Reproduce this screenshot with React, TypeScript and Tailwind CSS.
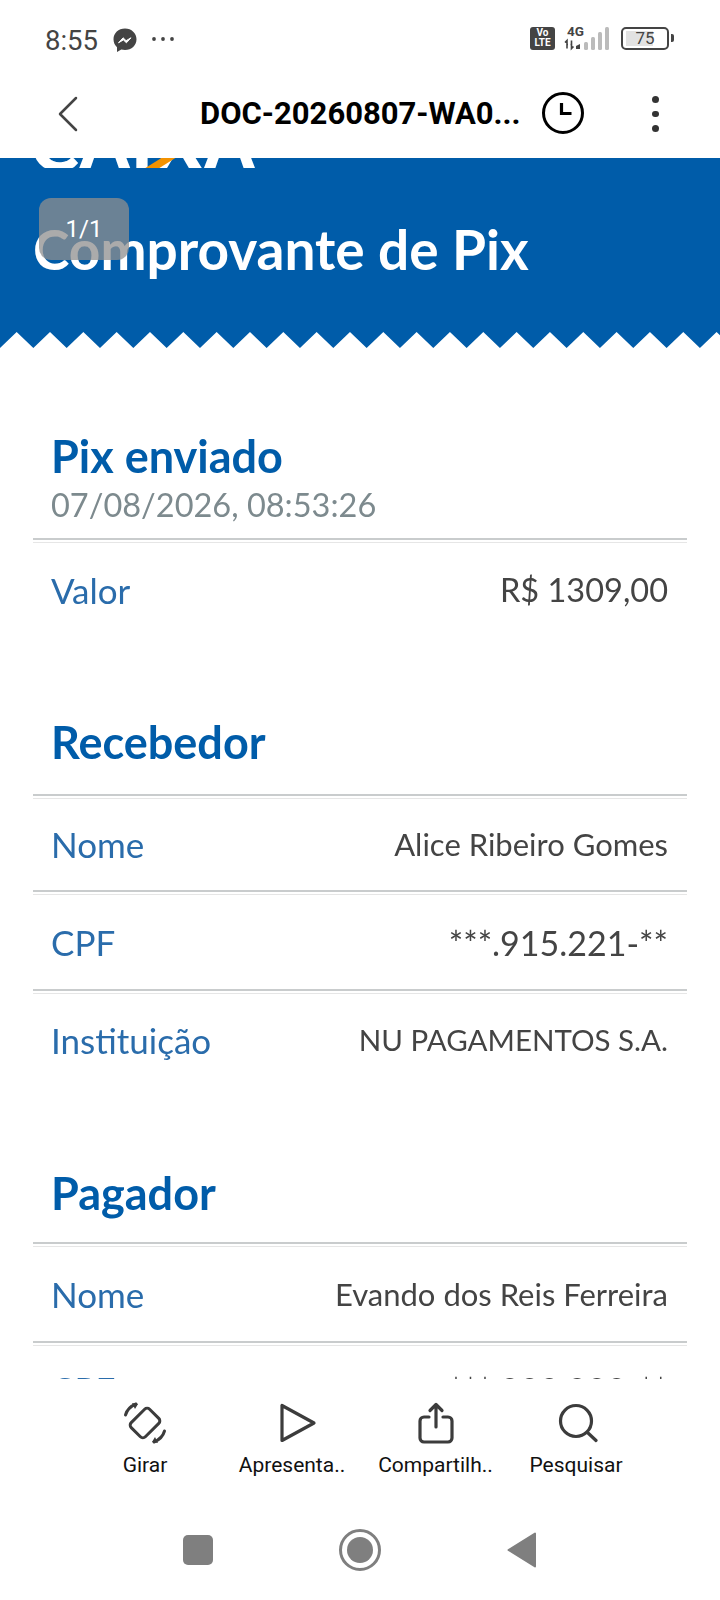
import React from 'react';

const docFont = "font-['Lato',sans-serif]";
const roboto = "font-['Roboto',sans-serif]";

function Divider() {
  return <div className="mx-[33px] h-[5px] border-t-2 border-b border-t-[#c9cccd] border-b-[#e6e6e6]" />;
}

function Row({ label, value, height, valueSize }: { label: string; value: string; height: string; valueSize: string }) {
  return (
    <div className={`flex items-center justify-between pl-[51px] pr-[52px] ${height}`}>
      <span className="text-[35px] text-[#2a6cab]">{label}</span>
      <span className={`${valueSize} text-[#444]`}>{value}</span>
    </div>
  );
}

function SectionTitle({ children, className }: { children: string; className: string }) {
  return <h2 className={`pl-[51px] text-[45px] leading-[50px] font-bold text-[#005ca9] ${className}`}>{children}</h2>;
}

function Zigzag() {
  const teeth = Array.from({ length: 23 }, (_, i) => `${i * 33.33} ,16 ${i * 33.33 + 16.67},0`).join(' ');
  return (
    <svg width="720" height="18" viewBox="0 0 720 18" className="block">
      <polygon points={`0,18 ${teeth} 720,18`} fill="#fff" />
    </svg>
  );
}

function ToolItem({ label, icon, width, iconClass = '' }: { label: string; icon: React.ReactNode; width: string; iconClass?: string }) {
  return (
    <div className={`flex flex-col items-center ${width}`}>
      <div className={`flex h-[44px] items-center ${iconClass}`}>{icon}</div>
      <span className="mt-[6px] whitespace-nowrap text-[21px] leading-[28px] text-[#111]">{label}</span>
    </div>
  );
}

export default function App() {
  return (
    <div className={`relative flex h-[1600px] w-[720px] flex-col overflow-hidden bg-white ${roboto}`}>
      {/* status bar */}
      <div className="flex h-[75px] items-end pb-[17px] pl-[45px] pr-[46px] text-[#444]">
        <span className="text-[27.5px] leading-[34px]">8:55</span>
        <svg width="24" height="25" viewBox="0 0 24 25" className="mb-[5px] ml-[15px]">
          <path d="M12 0.5C5.4 0.5 0.5 5.2 0.5 11.3c0 3.2 1.3 6 3.5 7.9V24l4.3-2.4c1.2.3 2.4.5 3.7.5 6.6 0 11.5-4.8 11.5-10.8S18.6.5 12 .5z" fill="#444" />
          <path d="M5.500 14.800l4.600-5 3 2.900 4.900-2.900-4.600 5-3-2.900z" fill="#fff" stroke="#fff" strokeWidth="1" strokeLinejoin="round" />
        </svg>
        <svg width="24" height="6" viewBox="0 0 24 6" className="mb-[16px] ml-[14px]">
          <circle cx="3" cy="3" r="1.900" fill="#444" />
          <circle cx="12" cy="3" r="1.900" fill="#444" />
          <circle cx="21" cy="3" r="1.900" fill="#444" />
        </svg>
        <div className="ml-auto flex items-center gap-[8px] pb-[7px]">
          <div className="flex h-[23px] w-[25px] flex-col items-center justify-center rounded-[3px] bg-[#444] text-[10px] leading-[10px] font-bold text-white">
            <span>Vo</span>
            <span>LTE</span>
          </div>
          <svg width="48" height="26" viewBox="0 0 48 26">
            <text x="4" y="11" fontSize="13.500" fontWeight="700" fill="#444" fontFamily="Roboto, sans-serif">4G</text>
            <path d="M2 17.500l2-2v8M4 19.500h1M8.500 15.500v8l2-2M7.500 19.500h1" stroke="#444" strokeWidth="1.600" fill="none" />
            <path d="M13 24v-3l4-2v5z" fill="#444" />
            <rect x="21" y="17" width="4" height="8" rx="1.500" fill="#bbb" />
            <rect x="28" y="12" width="4" height="13" rx="1.500" fill="#bbb" />
            <rect x="35" y="7" width="4" height="18" rx="1.500" fill="#bbb" />
            <rect x="42" y="2" width="4" height="23" rx="1.500" fill="#bbb" />
          </svg>
          <div className="ml-[2px] flex items-center">
            <div className="relative flex h-[23px] w-[48px] items-center justify-center overflow-hidden rounded-[5px] border-2 border-[#444]">
              <div className="absolute inset-y-[2px] left-[3px] w-[27px] bg-[#e2e2e2]" />
              <span className="relative text-[17px] leading-none text-[#444]">75</span>
            </div>
            <div className="ml-[2px] h-[8px] w-[3px] rounded-r-[2px] bg-[#444]" />
          </div>
        </div>
      </div>

      {/* toolbar */}
      <div className="flex h-[83px] items-center pb-[5px] pl-[58px]">
        <svg width="20" height="36" viewBox="0 0 20 36" fill="none" stroke="#444" strokeWidth="2.500" strokeLinecap="round" strokeLinejoin="round">
          <path d="M18 2L2 18l16 16" />
        </svg>
        <span className="ml-[122px] w-[325px] whitespace-nowrap text-[31px] font-bold text-black">DOC-20260807-WA0...</span>
        <svg width="44" height="44" viewBox="0 0 44 44" className="mb-[2px] ml-[16px]">
          <circle cx="22" cy="22" r="19.500" fill="none" stroke="#000" strokeWidth="3" />
          <path d="M20.500 12v10.500h10" fill="none" stroke="#000" strokeWidth="3.200" />
        </svg>
        <div className="ml-[67px] flex flex-col gap-[8px]">
          <div className="size-[6.500px] rounded-full bg-[#333]" />
          <div className="size-[6.500px] rounded-full bg-[#333]" />
          <div className="size-[6.500px] rounded-full bg-[#333]" />
        </div>
      </div>

      {/* document */}
      <div className={`h-[1221px] overflow-hidden ${docFont} blur-[0.5px]`}>
        <div className="flex h-[190px] flex-col justify-between bg-[#005ca9]">
          <div className="h-[10px] overflow-hidden pl-[30px]">
            <div className="relative -mt-[52px] w-[230px] text-[74px] leading-[74px] font-black text-white">
              CAIXA
              <div className="absolute bottom-[12px] left-[125px] h-[12px] w-[14px] -skew-x-[58deg] bg-[#f39200]" />
            </div>
          </div>
          <h1 className="pb-[67px] pl-[33px] text-[55px] leading-[64px] font-bold text-white">Comprovante de Pix</h1>
        </div>
        <div className="-mt-[16px]">
          <Zigzag />
        </div>
        <SectionTitle className="mt-[81px]">Pix enviado</SectionTitle>
        <p className="mt-[6px] pl-[51px] text-[32.500px] leading-[36px] text-[#7d8a8e]">07/08/2026, 08:53:26</p>
        <div className="mt-[15px]"><Divider /></div>
        <Row label="Valor" value="R$ 1309,00" height="h-[94px]" valueSize="text-[32.500px]" />
        <SectionTitle className="mt-[80px]">Recebedor</SectionTitle>
        <div className="mt-[27px]"><Divider /></div>
        <Row label="Nome" value="Alice Ribeiro Gomes" height="h-[91px]" valueSize="text-[31px]" />
        <Divider />
        <Row label="CPF" value="***.915.221-**" height="h-[94px]" valueSize="text-[34px]" />
        <Divider />
        <Row label="Instituição" value="NU PAGAMENTOS S.A." height="h-[92px]" valueSize="text-[29.500px]" />
        <SectionTitle className="mt-[82px]">Pagador</SectionTitle>
        <div className="mt-[24px]"><Divider /></div>
        <Row label="Nome" value="Evando dos Reis Ferreira" height="h-[94px]" valueSize="text-[31px]" />
        <Divider />
        <Row label="CPF" value="***.000.000-**" height="h-[86px]" valueSize="text-[34px]" />
      </div>

      {/* tool row */}
      <div className="flex pl-[72px] pt-[22px]">
        <ToolItem
          label="Girar"
          width="w-[146px]"
          icon={
            <svg width="44" height="44" viewBox="0 0 44 44" fill="none" stroke="#3c3c3c" strokeWidth="3" strokeLinejoin="round">
              <rect x="9" y="12" width="26" height="20" rx="3.500" transform="rotate(-45 22 22)" />
              <path d="M2.500 14C4 8.500 7 5.500 13 3" strokeLinecap="round" />
              <path d="M41.500 30C40 35.500 37 38.500 31 41" strokeLinecap="round" />
              <path d="M9 2l6 1-3 5zM35 42l-6-1 3-5z" fill="#3c3c3c" stroke="none" />
            </svg>
          }
        />
        <ToolItem
          label="Apresenta.."
          width="w-[148px]"
          iconClass="ml-[12px]"
          icon={
            <svg width="40" height="42" viewBox="0 0 40 42" fill="none" stroke="#3c3c3c" strokeWidth="3.200" strokeLinejoin="round">
              <path d="M4 3.500v35L36 21z" />
            </svg>
          }
        />
        <ToolItem
          label="Compartilh.."
          width="w-[139px]"
          icon={
            <svg width="36" height="42" viewBox="0 0 36 42" fill="none" stroke="#3c3c3c" strokeWidth="3.200" strokeLinecap="round" strokeLinejoin="round">
              <path d="M11 15H6a4 4 0 0 0-4 4v17a4 4 0 0 0 4 4h24a4 4 0 0 0 4-4V19a4 4 0 0 0-4-4h-5" />
              <path d="M18 25V3M12 8.500L18 2.500l6 6" />
            </svg>
          }
        />
        <ToolItem
          label="Pesquisar"
          width="w-[142px]"
          iconClass="ml-[3px]"
          icon={
            <svg width="40" height="40" viewBox="0 0 40 40" fill="none" stroke="#3c3c3c" strokeWidth="3.200" strokeLinecap="round">
              <circle cx="18" cy="18" r="15.500" />
              <path d="M29.500 29.500L38 37.500" />
            </svg>
          }
        />
      </div>

      {/* nav bar */}
      <div className="mt-auto flex h-[83px] items-start pl-[183px] pt-[12px]">
        <div className="mt-[6px] size-[30px] rounded-[5px] bg-[#7f7f7f]" />
        <div className="ml-[126px] flex size-[42px] items-center justify-center rounded-full border-[3px] border-[#7f7f7f]">
          <div className="size-[26px] rounded-full bg-[#7f7f7f]" />
        </div>
        <svg width="30" height="36" viewBox="0 0 30 36" className="ml-[126px] mt-[3px]">
          <path d="M28 1.500v33L1.500 18z" fill="#7f7f7f" stroke="#7f7f7f" strokeWidth="2" strokeLinejoin="round" />
        </svg>
      </div>

      {/* page counter */}
      <div className="absolute left-[39px] top-[198px] flex h-[62px] w-[90px] items-center justify-center rounded-[12px] bg-[#8f8f8f]/75 text-[24px] text-white">
        1/1
      </div>
    </div>
  );
}
